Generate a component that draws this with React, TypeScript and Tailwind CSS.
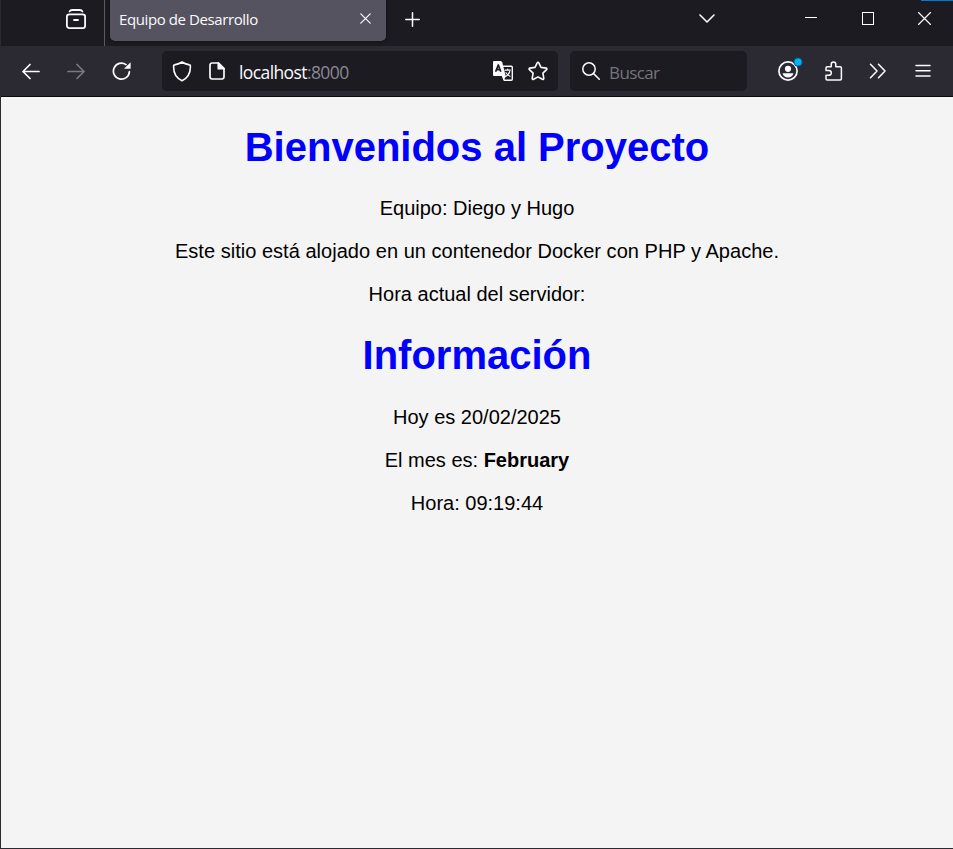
import type { ReactNode } from "react";

type IconProps = { className: string; w: number; h: number; sw?: number; children: ReactNode };

function Icon({ className, w, h, sw = 1.7, children }: IconProps) {
  return (
    <svg
      className={`shrink-0 ${className}`}
      width={w}
      height={h}
      viewBox={`0 0 ${w} ${h}`}
      fill="none"
      stroke="currentColor"
      strokeWidth={sw}
      strokeLinecap="round"
      strokeLinejoin="round"
    >
      {children}
    </svg>
  );
}

function TabBar() {
  return (
    <div className="flex h-[46px] items-start bg-[#1c1b22] text-[#fbfbfe]">
      <Icon className="mt-[9px] ml-[65px]" w={20} h={21} sw={1.8}>
        <path d="M3.6 2.400C4.200 1.300 5 1 6.200 1h7.600c1.200 0 2 .3 2.600 1.400" />
        <rect x="0.9" y="5.300" width="18.200" height="13.800" rx="2.400" />
        <path d="M8 11h4" />
      </Icon>
      <div className="ml-[18px] h-[46px] w-px shrink-0 bg-[#5b5a61]" />
      <div className="ml-[5px] flex h-[41px] w-[276px] shrink-0 items-start rounded-b-[5px] bg-[#55535f] shadow-[0_0_4px_rgba(0,0,0,0.5)]">
        <span className="mt-[9px] ml-[9px] w-[240px] text-[15px] leading-[21px] tracking-[-0.4px] whitespace-nowrap">
          Equipo de Desarrollo
        </span>
        <Icon className="mt-[13px] ml-[1px]" w={11} h={11} sw={1.2}>
          <path d="M.8.8l9.400 9.400M10.200.8L.8 10.200" />
        </Icon>
      </div>
      <Icon className="mt-[12px] ml-[19px]" w={15} h={15} sw={1.5}>
        <path d="M7.500.8v13.400M.8 7.500h13.400" />
      </Icon>
      <Icon className="mt-[14px] ml-[279px]" w={16} h={10} sw={1.6}>
        <path d="M1 1l7 7 7-7" />
      </Icon>
      <div className="mt-[17px] ml-[90px] h-px w-[12px] shrink-0 bg-white" />
      <div className="mt-[12px] ml-[45px] h-[13px] w-[12px] shrink-0 border border-white" />
      <Icon className="mt-[12px] ml-[44px]" w={13} h={13} sw={1.2}>
        <path d="M.5.5l12 12M12.500.5l-12 12" />
      </Icon>
    </div>
  );
}

function Toolbar() {
  return (
    <div className="flex h-[50px] items-start bg-[#2b2a33] text-[#fbfbfe]">
      <Icon className="mt-[17px] ml-[21px]" w={18} h={17}>
        <path d="M17 8.500H1M8 1.500L1 8.500l7 7" />
      </Icon>
      <Icon className="mt-[17px] ml-[27px] text-[#7a7980]" w={18} h={17}>
        <path d="M1 8.500h16M10 1.500l7 7-7 7" />
      </Icon>
      <Icon className="mt-[15px] ml-[27px]" w={20} h={20}>
        <path d="M17.400 10.600A8 8 0 1 1 14 3.600" />
        <path d="M18.600 1.200v6.600h-6.600z" fill="currentColor" stroke="none" />
      </Icon>
      <div className="mt-[5px] ml-[30px] flex h-[40px] w-[396px] shrink-0 items-start rounded-[5px] bg-[#1c1b22]">
        <Icon className="mt-[10px] ml-[10px]" w={20} h={21} sw={1.600}>
          <path d="M10 1c2.200 1.700 4.800 2.400 7.400 2.900.7.1 1 .6 1 1.200C18.600 12 16.500 16.800 10 19.800 3.500 16.800 1.400 12 1.600 5.100c0-.6.3-1.100 1-1.200C5.200 3.400 7.800 2.700 10 1z" />
        </Icon>
        <Icon className="mt-[11px] ml-[17px]" w={16} h={18}>
          <path d="M9.500 1H3.200C1.800 1 1 1.800 1 3.200v11.600C1 16.200 1.800 17 3.200 17h9.600c1.400 0 2.200-.8 2.200-2.200V6.500z" />
          <path d="M9.300 1v5.700H15z" fill="currentColor" />
        </Icon>
        <span className="mt-[10px] ml-[14px] w-[253px] text-[17.500px] leading-[23px] tracking-[-0.6px] whitespace-nowrap">
          localhost<span className="text-[#8a8990]">:8000</span>
        </span>
        <Icon className="mt-[10px] ml-[1px]" w={20} h={20} sw={1.400}>
          <path d="M10 5.200h8.200c.7 0 1.100.4 1.100 1.100v11.900c0 .7-.4 1.100-1.100 1.100h-7l-1.700-4.300" />
          <path d="M1.300 0h6.500l1.400 1.100 3.600 14.500-2 3.300-1.300-3.800H1.300C.5 15.100 0 14.600 0 13.800V1.300C0 .5.5 0 1.300 0z" fill="currentColor" stroke="none" />
          <path d="M2.600 10.700L5.300 4l2.500 6.700M3.600 8.600h3.300" stroke="#1c1b22" strokeWidth="1.700" strokeLinecap="butt" />
          <path d="M12 9.200h5.300M14.700 8v1.200M16.700 10.500c-.5 2.300-2 3.900-4 5M13 11.700c1 1.700 2.200 2.800 4 3.500" strokeWidth="1.200" />
        </Icon>
        <Icon className="mt-[10px] ml-[15px]" w={20} h={20} sw={1.600}>
          <path d="M9.200 1.800a.9.9 0 0 1 1.600 0l2.200 4.600 5.100.7c.8.100 1.100 1 .5 1.600l-3.700 3.500.9 5.100c.1.800-.7 1.400-1.400 1L10 15.900l-4.400 2.400c-.7.400-1.500-.2-1.400-1l.9-5.100-3.700-3.500c-.6-.6-.3-1.500.5-1.600l5.100-.7z" />
        </Icon>
      </div>
      <div className="mt-[5px] ml-[12px] flex h-[40px] w-[177px] shrink-0 items-start rounded-[5px] bg-[#1c1b22]">
        <Icon className="mt-[11px] ml-[12px]" w={18} h={18} sw={1.500}>
          <circle cx="7" cy="7" r="6.200" />
          <path d="M11.600 11.600l5.700 5.700" />
        </Icon>
        <span className="mt-[10px] ml-[9px] text-[17px] leading-[23px] tracking-[-0.600px] text-[#75747c]">Buscar</span>
      </div>
      <Icon className="mt-[11px] ml-[31px]" w={25} h={25} sw={1.700}>
        <circle cx="10" cy="14" r="9.100" />
        <circle cx="10" cy="11.800" r="3.100" fill="currentColor" stroke="none" />
        <path d="M4.500 16.200h11c-.6 2.600-2.600 4.300-5.500 4.300s-4.900-1.700-5.500-4.300z" fill="currentColor" stroke="none" />
        <circle cx="20" cy="5" r="4.600" fill="#0b587f" stroke="none" />
        <circle cx="20" cy="5" r="3.500" fill="#00b3f4" stroke="none" />
      </Icon>
      <Icon className="mt-[15px] ml-[22px]" w={18} h={20} sw={1.500}>
        <path d="M1 9.500V7c0-.8.4-1.200 1.200-1.200h4V3.300a2.300 2.300 0 0 1 4.600 0v2.500h4.400c.8 0 1.200.4 1.200 1.200v10.800c0 .8-.4 1.200-1.200 1.200h-13C1.400 19 1 18.600 1 17.800v-3.500h2.900a2.400 2.400 0 0 0 0-4.800z" />
      </Icon>
      <Icon className="mt-[17px] ml-[26px]" w={18} h={16} sw={1.600}>
        <path d="M1.500 1.300L8 8l-6.500 6.700M9.500 1.300L16 8l-6.500 6.700" />
      </Icon>
      <Icon className="mt-[18px] ml-[28px]" w={16} h={14} sw={1.500}>
        <path d="M1 1.500h14M1 6.800h14M1 12.100h14" />
      </Icon>
    </div>
  );
}

export default function App() {
  return (
    <div className="relative flex h-[849px] w-[953px] flex-col overflow-hidden border-b border-l border-[#2b2a33] bg-[#f4f4f4]">
      <div className="shrink-0 font-['Open_Sans','Noto_Sans',sans-serif]">
        <TabBar />
        <Toolbar />
        <div className="h-px bg-[#0c0c0d]" />
      </div>
      <div className="absolute top-0 right-0 h-px w-[32px] bg-[#0078d7]" />
      <main className="flex-1 pt-[27px] text-center font-['Liberation_Sans',Arial,sans-serif] text-[20px] leading-[23px] text-black">
        <h1 className="mb-[27px] text-[40px] leading-[46px] font-bold text-[#0000ff]">Bienvenidos al Proyecto</h1>
        <p className="mb-[20px]">Equipo: Diego y Hugo</p>
        <p className="mb-[20px] tracking-[0.03px]">Este sitio está alojado en un contenedor Docker con PHP y Apache.</p>
        <p>Hora actual del servidor:</p>
        <h1 className="mt-[26px] mb-[28px] text-[40px] leading-[46px] font-bold text-[#0000ff]">Información</h1>
        <p className="mb-[20px]">Hoy es 20/02/2025</p>
        <p className="mb-[20px]">
          El mes es: <b>February</b>
        </p>
        <p>Hora: 09:19:44</p>
      </main>
    </div>
  );
}
